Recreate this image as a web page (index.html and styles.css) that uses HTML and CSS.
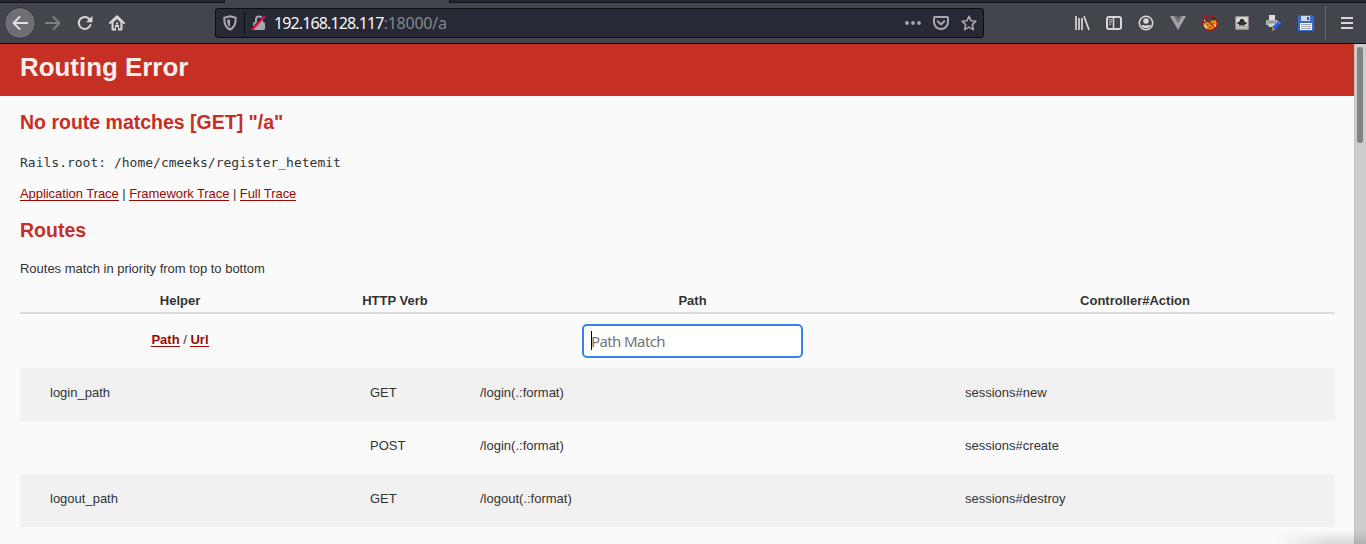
FILE: index.html
```html
<!DOCTYPE html>
<html lang="en">
<head>
<meta charset="utf-8">
<title>Action Controller: Exception caught</title>
<link rel="stylesheet" href="styles.css">
</head>
<body>
<div class="tabstrip"><div class="tab"></div></div>
<nav class="toolbar">
  <div class="nav">
    <span class="back"><svg width="16" height="16" viewBox="0 0 16 16"><path d="M15.2 8H1.5M7.5 2L1.5 8l6 6" class="s2"/></svg></span>
    <span class="slot dim"><svg width="16" height="16" viewBox="0 0 16 16"><path d="M.8 8h13.700M8.500 2l6 6-6 6" class="s2"/></svg></span>
    <span class="slot"><svg width="16" height="16" viewBox="0 0 16 16"><path d="M12.700 4.500A6 6 0 1 0 13.400 10" class="s2"/><path d="M15.500.8v6.400H9z" class="f"/></svg></span>
    <span class="slot"><svg width="16" height="16" viewBox="0 0 16 16"><path d="M1 8l7-6.800L15 8" class="s2"/><path d="M2.500 7.500L8 2.300l5.500 5.200V14.500q0 1-1 1H9V12H7v3.500H3.500q-1 0-1-1zM4.600 7.200v6.200H6V10h4v3.400h1.400V7.200L8 4z" class="f" fill-rule="evenodd"/><rect x="7" y="7.500" width="2" height="2" class="f"/></svg></span>
  </div>
  <div class="urlbar">
    <svg class="shield" width="14" height="16" viewBox="0 0 14 16"><path d="M7 1.200l5.700 1.600c.2 5.600-1 9.700-5.700 11.700C2.300 12.500 1.100 8.400 1.300 2.800z" class="s2"/><path d="M7 4.200v7.700C4.700 10.500 4.100 8 4.100 5z" class="f"/></svg>
    <span class="urlsep"></span>
    <svg class="lock" width="16" height="16" viewBox="0 0 16 16"><path d="M5 8V4.500a3 3 0 0 1 6 0V8" class="s2"/><rect x="2" y="7" width="12" height="8" rx="1.500" class="f"/><path d="M1.200 13.200L13 1" stroke="#272935" stroke-width="1.500"/><path d="M1.200 14.700L14 1.300" stroke="#e8104c" stroke-width="2"/></svg>
    <span class="url"><b>192.168.128.117</b>:18000/a</span>
    <svg class="dots" width="16" height="16" viewBox="0 0 16 16"><g class="f"><circle cx="2" cy="8" r="1.900"/><circle cx="8" cy="8" r="1.900"/><circle cx="14" cy="8" r="1.900"/></g></svg>
    <svg class="pocket" width="16" height="16" viewBox="0 0 16 16"><path d="M2 2h12q1 0 1 1v4a7 7 0 0 1-14 0V3q0-1 1-1zM4.700 6.300L8 9.500l3.300-3.200" class="s2"/></svg>
    <svg class="star" width="16" height="16" viewBox="0 0 16 16"><path d="M8 1.300l2 4.400 4.900.5-3.600 3.400 1 5L8 12.100l-4.300 2.500 1-5L1.100 6.200 6 5.700z" class="s2 thin"/></svg>
  </div>
  <div class="addons">
    <span class="slot"><svg width="16" height="16" viewBox="0 0 16 16"><path d="M2 1v14M5 3v12M8 3v12" class="s2 flat"/><path d="M10 1.300L15 15" class="s2 flat"/></svg></span>
    <span class="slot"><svg width="16" height="16" viewBox="0 0 16 16"><rect x="1" y="2" width="14" height="12" rx="2" class="s2"/><path d="M7.500 2v12" class="s2 thin"/><path d="M3 4.800h3M3 7h3M3 9.200h2" class="s1"/></svg></span>
    <span class="slot"><svg width="16" height="16" viewBox="0 0 16 16"><circle cx="8" cy="8" r="6.700" class="s2 thin"/><circle cx="8" cy="6" r="2.800" class="f"/><path d="M3.300 10.500c2-1 2 .1 4.700.1s2.700-1.100 4.700-.1C11.500 14 4.500 14 3.300 10.500z" class="f"/></svg></span>
    <span class="slot"><svg width="16" height="16" viewBox="0 0 16 16"><path d="M0 1h4l4 7 4-7h4L8 15z" fill="#a5a5a5"/><path d="M4 1h2.500L8 3.600 9.500 1H12L8 8z" fill="#747474"/></svg></span>
    <span class="slot"><svg width="16" height="16" viewBox="0 0 16 16"><path d="M1.500 8l3-1L8 7.500 11 4l3 1 1 4-3 4-4 2-3-.5L1.500 12z" fill="#e08a1c"/><path d="M1.500 3l2 1 1 3-3 1zM9 2.500l4-.5 1 3-3 .5z" fill="#2c2e33"/><path d="M1.500 8.500L5 12v2.500L2.500 13zM12 11l3-3-1 4-3 2zM2 4l2 2.500H2z" fill="#f3e5ce"/><path d="M5 9.500l1.500.5M10 9l1.500-.8M7 12.500h2" stroke="#7a4109"/><circle cx="8" cy="8" r="7.300" fill="none" stroke="#cb0909" stroke-width="1.100"/><path d="M2.800 2.800l10.400 10.400" stroke="#cb0909" stroke-width="1.100"/></svg></span>
    <span class="slot"><svg width="16" height="16" viewBox="0 0 16 16"><rect x="1.300" y="1.300" width="13.400" height="13.400" rx="1" fill="#b3aaa3"/><rect x="2.300" y="2.300" width="11.400" height="8.500" fill="#dcd8d4"/><path d="M6.500 4h3l1 2.500 2 1 .5 2-2-.8-.3 2.300-1.700-1L8 11l-1-1-1.700 1L5 8.700l-2 .8.500-2 2-1z" fill="#2b2f30"/><path d="M3 12.500h10" stroke="#c9c1bb"/></svg></span>
    <span class="slot"><svg width="16" height="16" viewBox="0 0 16 16"><path d="M3 0h6v5H3z" fill="#dedede"/><path d="M1 5h10l2 2v3H0V6z" fill="#b5b5b5"/><path d="M2 6.500h8v1.200H2z" fill="#858585"/><path d="M2 9h8v3H3z" fill="#d2d2d2"/><path d="M12.500 6l3 1.500-6.200 7-3-2.500z" fill="#285be8"/><path d="M11.500 7l2 1.500" stroke="#6d9dff"/><path d="M6.300 12l3 2.500-3.300 1.300z" fill="#b99b3a"/></svg></span>
    <span class="slot"><svg width="16" height="16" viewBox="0 0 16 16"><path d="M1 0h13l2 2v14H0V1z" fill="#356bd0"/><path d="M3 1h9v5H3z" fill="#d2d8e3"/><path d="M9 2h2v3H9z" fill="#2459b8"/><path d="M2 8h12v7H2z" fill="#f4f4f1"/><path d="M3 9.500h10M3 11.500h10M3 13.500h10" stroke="#a2a2a2"/></svg></span>
  </div>
  <span class="divider"></span>
  <span class="slot menu"><svg width="16" height="16" viewBox="0 0 16 16"><path d="M2 3h12M2 8h12M2 13h12" class="s2 flat2"/></svg></span>
</nav>
<div class="viewport">
  <main class="page">
    <header><h1>Routing Error</h1></header>
    <div class="container">
      <h2>No route matches [GET] "/a"</h2>
      <p class="root"><code>Rails.root: /home/cmeeks/register_hetemit</code></p>
      <div class="traces"><a>Application Trace</a> | <a>Framework Trace</a> | <a>Full Trace</a></div>
      <h2 class="routes-title">Routes</h2>
      <p class="intro">Routes match in priority from top to bottom</p>
      <table>
        <colgroup><col class="c1"><col class="c2"><col class="c3"><col class="c4"></colgroup>
        <thead>
          <tr class="heads"><th>Helper</th><th>HTTP Verb</th><th>Path</th><th>Controller#Action</th></tr>
          <tr class="search"><th><a>Path</a> <span>/</span> <a>Url</a></th><th></th><th><div class="field"><i></i>Path Match</div></th><th></th></tr>
        </thead>
        <tbody>
          <tr><td>login_path</td><td>GET</td><td>/login(.:format)</td><td>sessions#new</td></tr>
          <tr><td></td><td>POST</td><td>/login(.:format)</td><td>sessions#create</td></tr>
          <tr><td>logout_path</td><td>GET</td><td>/logout(.:format)</td><td>sessions#destroy</td></tr>
        </tbody>
      </table>
    </div>
  </main>
  <div class="scrollbar"><div class="thumb"></div></div>
  <div class="shade"></div>
</div>
</body>
</html>
```
FILE: styles.css
```css
* { box-sizing: border-box; }
body {
  margin: 0;
  height: 544px;
  overflow: hidden;
  display: flex;
  flex-direction: column;
  background: #fafafa;
  color: #333;
  font: 13px/18px "Liberation Sans", Arial, sans-serif;
}
svg { display: block; flex: none; }
.tabstrip { height: 3px; background: #22252f; border-bottom: 1px solid #111319; padding-left: 224px; flex: none; }
.tab { width: 226px; height: 3px; background: #42454c; border: solid #111319; border-width: 0 1px; }
.toolbar { height: 41px; flex: none; display: flex; align-items: center; background: #42454c; border-bottom: 1px solid #0e0f13; padding: 0 3px 0 4px; }
.nav { display: flex; width: 211px; }
.slot { width: 32px; height: 32px; display: flex; align-items: center; justify-content: center; color: #d7d7d8; }
.dim { color: #808185; }
.back { width: 32px; height: 32px; margin-right: 1px; border-radius: 50%; background: #6e6f74; border: 1px solid #303239; display: flex; align-items: center; justify-content: center; color: #dfdfe0; }
.s2 { fill: none; stroke: currentColor; stroke-width: 2; stroke-linecap: round; stroke-linejoin: round; }
.thin { stroke-width: 1.6; }
.flat { stroke-width: 1.7; stroke-linecap: butt; }
.flat2 { stroke-linecap: butt; }
.s1 { fill: none; stroke: currentColor; stroke-width: 1; }
.f { fill: currentColor; }
.urlbar { width: 769px; height: 30px; display: flex; align-items: center; background: #272935; border: 1px solid #0c0d12; border-radius: 3px; color: #a9a9ad; padding-left: 7px; }
.urlsep { width: 1px; height: 22px; background: #0c0d12; margin: 0 6px 0 7px; }
.url { font: 16px/22px "Noto Sans", sans-serif; letter-spacing: -.25px; color: #85868d; margin-left: 7px; flex: 1; }
.url b { font-weight: 400; letter-spacing: -.87px; color: #f9f9fa; }
.pocket { margin: 0 12px; }
.star { margin-right: 6px; }
.addons { display: flex; margin-left: 82px; }
.divider { width: 1px; height: 34px; margin: 0 5px 0 3px; background: #67696e; }
.viewport { flex: 1; display: flex; min-height: 0; position: relative; }
.page { width: 1354px; overflow: hidden; }
header { background: #c52f24; height: 52px; padding: 9px 20px; }
h1 { margin: 0; font-size: 25.9px; line-height: 28px; color: #faeeed; }
.container { padding: 14px 19px 0 20px; }
h2 { margin: 0; color: #c52f24; font-size: 19.5px; line-height: 25px; }
p { margin: 0; }
.root { margin-top: 19px; }
code { font: 13px/18px "DejaVu Sans Mono", monospace; display: block; }
.traces { margin-top: 13px; letter-spacing: -.06px; }
a { color: #980905; border-bottom: 1px solid #980905; }
.traces a, .search a { display: inline-block; line-height: 15px; height: 15px; }
.routes-title { margin-top: 15px; }
.intro { margin-top: 17px; letter-spacing: -.02px; }
table { margin-top: 12px; width: 1315px; table-layout: fixed; border-collapse: separate; border-spacing: 0; }
.c1 { width: 320px; } .c2 { width: 110px; } .c3 { width: 485px; } .c4 { width: 400px; }
th, td { padding: 0; }
.heads th { height: 24px; border-bottom: 2px solid #ddd; vertical-align: top; padding-top: 2px; line-height: 18px; }
.search th { height: 54px; padding-bottom: 1px; }
.search th:first-child { padding-bottom: 3px; }
.search th > span { font-weight: 400; }
.field { width: 221px; height: 34px; margin: 0 auto; display: flex; align-items: center; background: #fff; border: 2px solid #3584e4; border-radius: 5px; padding-left: 7px; color: #757575; font: 15px/20px "Noto Sans", sans-serif; letter-spacing: -.6px; }
.field i { width: 1px; height: 19px; background: #000; margin-right: -1px; }
tbody td { height: 53px; }
tbody tr:nth-child(odd) { background: #f1f1f1; }
td { padding: 0 30px 3px; }
.shade { position: absolute; right: 0; bottom: 0; width: 90px; height: 14px; background: linear-gradient(transparent, #0002); mask-image: linear-gradient(to right, transparent, #000 60%); }
.scrollbar { width: 12px; background: #cdcdcd; border-left: 1px solid #c3bfb9; padding: 3px 3px 0 2px; }
.thumb { width: 6px; height: 96px; border-radius: 3px; background: #7f8383; }
```
